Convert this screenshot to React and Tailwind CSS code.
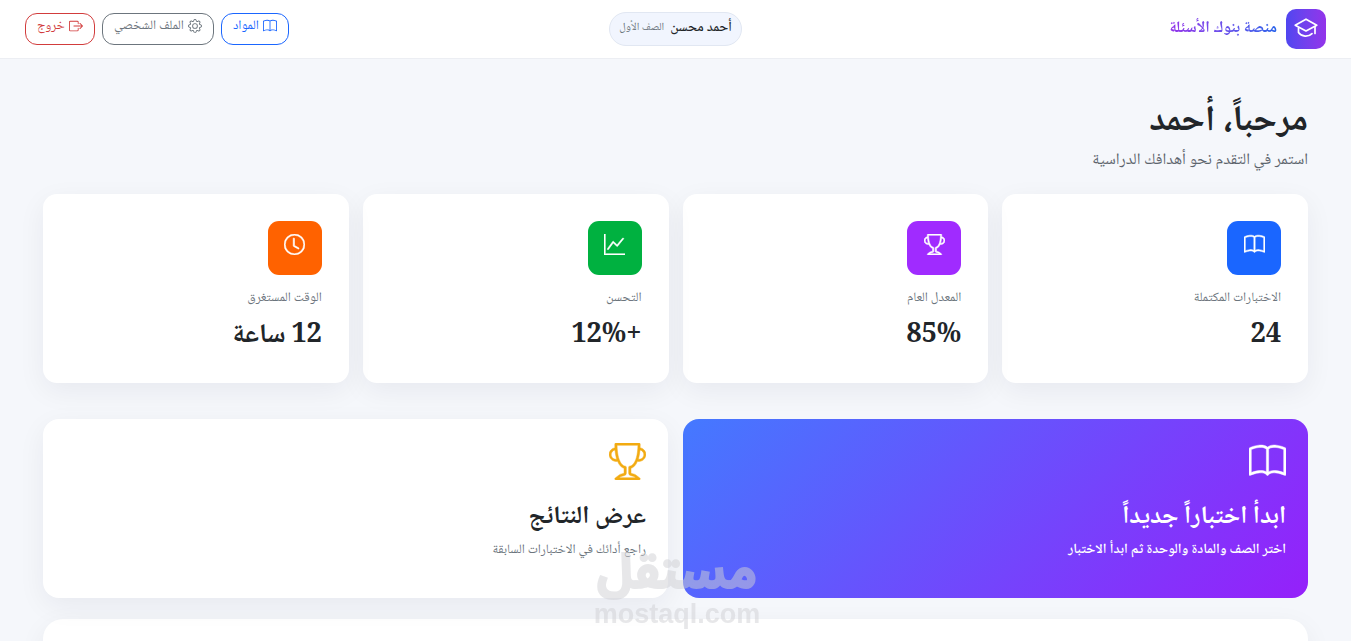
import React from 'react';
import { BsBook, BsTrophy, BsGraphUp, BsClock, BsGear, BsBoxArrowRight } from 'react-icons/bs';

const stats = [
  { label: 'الاختبارات المكتملة', value: '24', Icon: BsBook, tone: 'bg-[#1a66ff]' },
  { label: 'المعدل العام', value: '85%', Icon: BsTrophy, tone: 'bg-[#a02bff]' },
  { label: 'التحسن', value: '+12%', Icon: BsGraphUp, tone: 'bg-[#00b140]' },
  { label: 'الوقت المستغرق', value: '12 ساعة', Icon: BsClock, tone: 'bg-[#ff6200]' },
];

const navItems = [
  { label: 'المواد', Icon: BsBook, tone: 'border-[#1a66ff] text-[#1a66ff]' },
  { label: 'الملف الشخصي', Icon: BsGear, tone: 'border-[#6c757d] text-[#6c757d]' },
  { label: 'خروج', Icon: BsBoxArrowRight, tone: 'border-[#d23c3c] text-[#d23c3c]' },
];

function CapIcon() {
  return (
    <svg viewBox="0 0 24 24" className="size-6" fill="none" stroke="currentColor" strokeWidth="1.7" strokeLinecap="round" strokeLinejoin="round" aria-hidden="true">
      <path d="M12 3.2 1.2 9.2 12 15 22.8 9.2Z" />
      <path d="M4.500 12V16.500C7.500 21 14.500 21.200 18 17.600" />
      <path d="M21 10.500V17.500" />
    </svg>
  );
}

function Header() {
  return (
    <header className="grid grid-cols-[1fr_auto_1fr] items-center border-b border-[#eceef3] bg-white px-[25px] py-[9px]">
      <a href="#" className="flex items-center gap-[9px] justify-self-start">
        <span className="flex size-10 items-center justify-center rounded-[10px] bg-linear-to-r from-[#4f46f0] to-[#9333ea] pb-[2px] text-white">
          <CapIcon />
        </span>
        <span className="bg-linear-to-l from-[#2563eb] to-[#9333ea] bg-clip-text text-[16px] leading-7 font-bold text-transparent">منصة بنوك الأسئلة</span>
      </a>
      <div className="flex h-[34px] items-center gap-[6px] rounded-full border border-[#e1e7f2] bg-[#f1f5fe] px-[9px] pb-[2px]">
        <span className="text-[14px] font-medium text-[#212529]">أحمد محسن</span>
        <span className="text-[11px] text-[#6c757d]">الصف الأول</span>
      </div>
      <nav className="flex gap-[7px] justify-self-end">
        {navItems.map(({ label, Icon, tone }) => (
          <button key={label} type="button" className={`flex h-8 items-center gap-1 rounded-xl border px-[11px] pb-[6px] text-[13px] leading-5 ${tone}`}>
            <Icon className="size-[14px]" />
            <span>{label}</span>
          </button>
        ))}
      </nav>
    </header>
  );
}

function StatCard({ label, value, Icon, tone }) {
  return (
    <article className="h-[189px] rounded-[14px] bg-white p-[27px] shadow-[0_8px_28px_rgba(20,25,45,0.06)]">
      <div className={`flex size-[54px] items-center justify-center rounded-[11px] pb-2 text-white ${tone}`}>
        <Icon className="size-[21px] [stroke-width:0.4]" />
      </div>
      <p className="mt-[13px] text-[13px] leading-5 text-[#6c757d]">{label}</p>
      <p className="mt-2 text-[27px] leading-10 font-bold text-[#212529]">{value}</p>
    </article>
  );
}

function Watermark() {
  return (
    <div className="pointer-events-none fixed top-[545px] left-1/2 flex w-[164px] -translate-x-1/2 flex-col items-center text-[#cfd0d4] opacity-50" aria-hidden="true">
      <span className="font-['Noto_Sans_Arabic','DejaVu_Sans',sans-serif] text-[48px] leading-[55px] font-bold whitespace-nowrap [-webkit-text-stroke:2px_currentColor]">مستقل</span>
      <span dir="ltr" className="font-['Liberation_Sans',sans-serif] text-[27px] leading-7 font-bold">mostaql.com</span>
    </div>
  );
}

export default function App() {
  return (
    <div dir="rtl" lang="ar" className="h-screen overflow-hidden border-r-3 border-white bg-[#f5f7fb] font-['Noto_Naskh_Arabic','Noto_Serif',serif]">
      <Header />
      <main className="px-[43px] pt-[38px]">
        <h1 className="text-[36px] leading-[52px] font-bold text-[#212529]">مرحباً، أحمد</h1>
        <p className="text-[16px] leading-6 text-[#5c646c]">استمر في التقدم نحو أهدافك الدراسية</p>
        <section className="mt-[21px] grid grid-cols-4 gap-[14px]">
          {stats.map((s) => <StatCard key={s.label} {...s} />)}
        </section>
        <section className="mt-9 grid grid-cols-2 gap-[15px]">
          <a href="#" className="block h-[179px] rounded-2xl bg-[linear-gradient(135deg,#4479ff,#9520fa)] px-[22px] pt-6 text-white">
            <BsBook className="size-[37px] [stroke-width:0.2]" />
            <h2 className="mt-[18px] text-[25px] leading-10 font-bold">ابدأ اختباراً جديداً</h2>
            <p className="mt-[2px] text-[14px] leading-5 font-semibold">اختر الصف والمادة والوحدة ثم ابدأ الاختبار</p>
          </a>
          <a href="#" className="block h-[179px] rounded-2xl bg-white px-[22px] pt-6 text-[#212529] shadow-[0_8px_28px_rgba(20,25,45,0.06)]">
            <BsTrophy className="size-[37px] text-[#f2ab12] [stroke-width:0.2]" />
            <h2 className="mt-[18px] text-[25px] leading-10 font-bold">عرض النتائج</h2>
            <p className="mt-[2px] text-[13px] leading-5 text-[#6c757d]">راجع أدائك في الاختبارات السابقة</p>
          </a>
        </section>
        <section className="mt-[21px] h-32 rounded-[20px] bg-white shadow-[0_8px_28px_rgba(20,25,45,0.06)]" />
      </main>
      <Watermark />
    </div>
  );
}
